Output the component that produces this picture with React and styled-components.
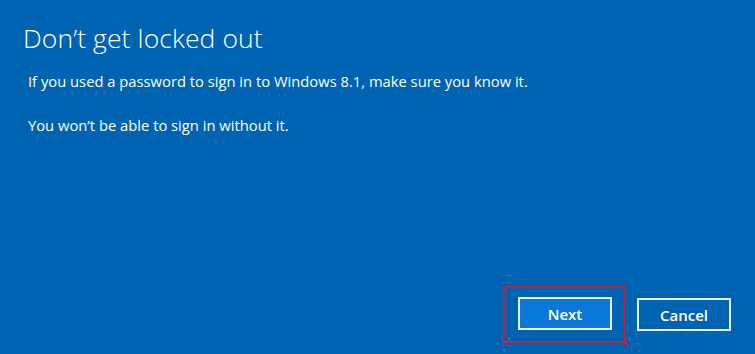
import React from "react";
import styled, { createGlobalStyle } from "styled-components";

const Global = createGlobalStyle`
  html, body { margin: 0; padding: 0; background: #0063b1; }
  #root { width: 755px; height: 354px; }
`;

const Page = styled.div`
  box-sizing: border-box;
  width: 755px;
  height: 354px;
  background: #0063b1;
  color: #ffffff;
  font-family: "Open Sans", "Noto Sans", sans-serif;
  display: flex;
  flex-direction: column;
  padding: 21px 24px 11px 23px;
`;

const Title = styled.h1`
  margin: 0;
  font-weight: 300;
  font-size: 26.5px;
  line-height: 34px;
  letter-spacing: 0.1px;
`;

const Body = styled.div`
  flex: 1;
  display: flex;
  flex-direction: column;
  gap: 24px;
  padding: 16px 0 0 5px;
`;

const Para = styled.p`
  margin: 0;
  font-size: 14.75px;
  line-height: 20px;
  font-weight: 400;
`;

const Footer = styled.div`
  display: flex;
  justify-content: flex-end;
  align-items: center;
`;

const Highlight = styled.div`
  position: relative;
  border: 2px solid #c0213d;
  padding: 9px 12px 11px 13px;
  margin-right: 11px;
  &::after {
    content: "";
    position: absolute;
    right: -4px;
    bottom: -4px;
    width: 4px;
    height: 4px;
    background: #c0213d;
  }
`;

const Button = styled.button`
  box-sizing: border-box;
  width: 94px;
  height: 33px;
  border: 2px solid #e8f0f8;
  background: ${(p) => (p.$primary ? "#0a78d6" : "#0063b1")};
  color: #ffffff;
  font-family: "Open Sans", "Noto Sans", sans-serif;
  font-weight: 600;
  font-size: 15px;
  padding: 0;
  cursor: pointer;
`;

export default function App() {
  return (
    <>
      <Global />
      <Page>
        <Title>Don’t get locked out</Title>
        <Body>
          <Para>If you used a password to sign in to Windows 8.1, make sure you know it.</Para>
          <Para>You won’t be able to sign in without it.</Para>
        </Body>
        <Footer>
          <Highlight>
            <Button $primary>Next</Button>
          </Highlight>
          <Button>Cancel</Button>
        </Footer>
      </Page>
    </>
  );
}
